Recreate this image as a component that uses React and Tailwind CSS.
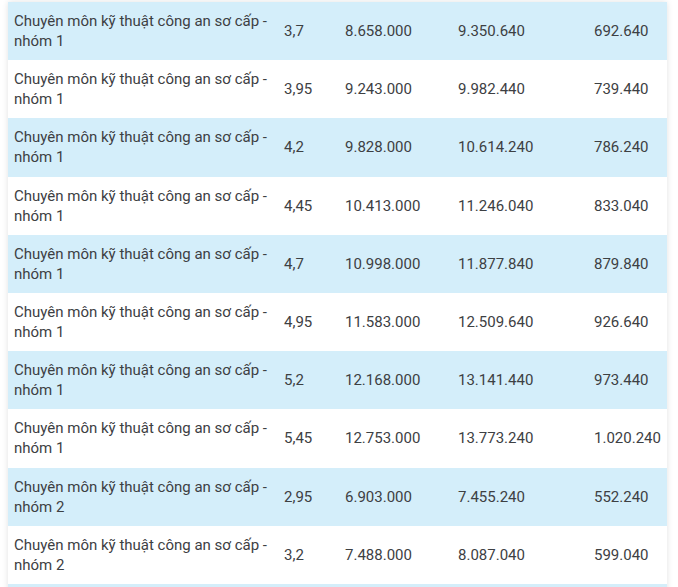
import React from 'react';

const rows = [
  ['1', '3,7', '8.658.000', '9.350.640', '692.640'],
  ['1', '3,95', '9.243.000', '9.982.440', '739.440'],
  ['1', '4,2', '9.828.000', '10.614.240', '786.240'],
  ['1', '4,45', '10.413.000', '11.246.040', '833.040'],
  ['1', '4,7', '10.998.000', '11.877.840', '879.840'],
  ['1', '4,95', '11.583.000', '12.509.640', '926.640'],
  ['1', '5,2', '12.168.000', '13.141.440', '973.440'],
  ['1', '5,45', '12.753.000', '13.773.240', '1.020.240'],
  ['2', '2,95', '6.903.000', '7.455.240', '552.240'],
  ['2', '3,2', '7.488.000', '8.087.040', '599.040'],
];

const App = () => {
  return (
    <div className="w-[678px] h-[587px] overflow-hidden bg-white pt-[2px] pl-2 pr-[11px]">
      <div
        className="text-[15px] leading-[20px] text-[#3d4043] shadow-[0_0_6px_rgba(0,0,0,0.12)]"
        style={{ fontFamily: 'Roboto, "Noto Sans", sans-serif' }}
      >
        {rows.concat([['2', '', '', '', '']]).map((r, i) => (
          <div
            key={i}
            className={`flex items-center h-[58.2px] ${i % 2 === 0 ? 'bg-[#d4eefa]' : 'bg-white'}`}
          >
            <div className="w-[270px] pl-[6px] pr-1">
              {r[1] && <>Chuyên môn kỹ thuật công an sơ cấp - nhóm {r[0]}</>}
            </div>
            <div className="w-[61px] pl-[6px]">{r[1]}</div>
            <div className="w-[113px] pl-[6px]">{r[2]}</div>
            <div className="w-[136px] pl-[6px]">{r[3]}</div>
            <div className="flex-1 pl-[6px]">{r[4]}</div>
          </div>
        ))}
      </div>
    </div>
  );
};

export default App;
